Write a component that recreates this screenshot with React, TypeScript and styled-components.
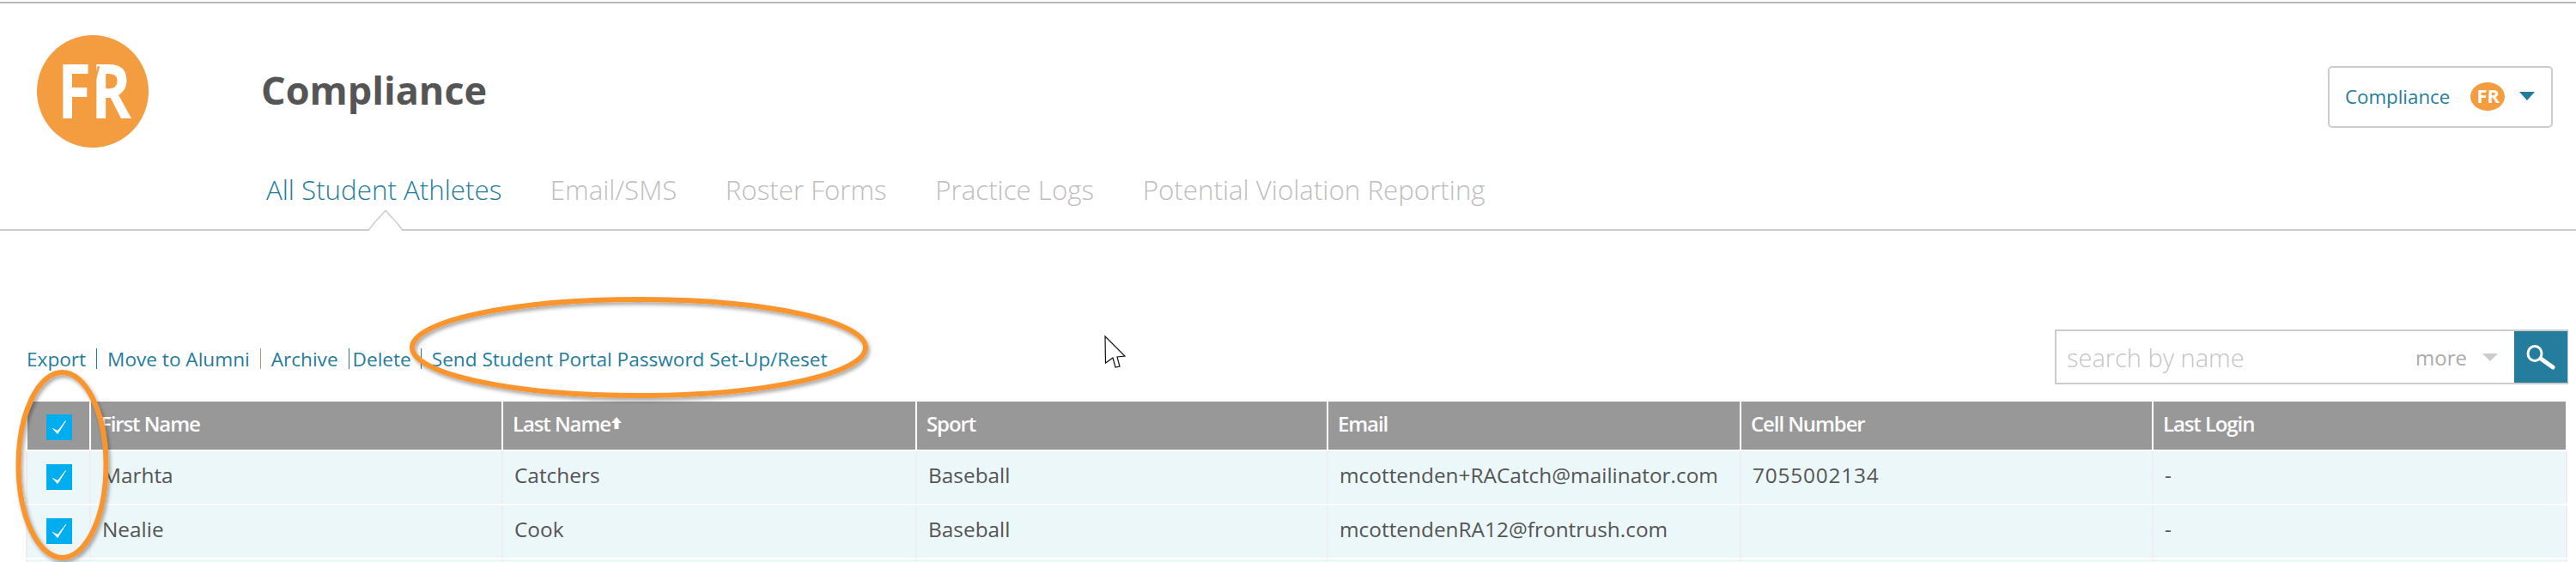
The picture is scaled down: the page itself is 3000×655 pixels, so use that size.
import React from 'react'
import styled, { createGlobalStyle } from 'styled-components'

const GlobalStyle = createGlobalStyle`
  html, body {
    margin: 0;
    padding: 0;
    background: #ffffff;
    font-family: "Open Sans", "Liberation Sans", sans-serif;
  }
`;

const Page = styled.div`
  position: relative;
  width: 3000px;
  height: 655px;
  overflow: hidden;
  padding-top: 2px;
  box-sizing: border-box;
`;

const TopRule = styled.div`
  height: 2px;
  background: #b7b7b7;
`;

const Masthead = styled.header`
  display: grid;
  grid-template-columns: 304px 1fr auto;
  grid-template-rows: 150px 113px;
  border-bottom: 2px solid #cccccc;
`;

const LogoSlot = styled.div`
  padding: 37px 0 0 43px;
`;

const Title = styled.h1`
  margin: 0;
  padding-top: 72px;
  font-size: 45px;
  line-height: 58px;
  font-weight: 700;
  color: #555555;
`;

const AccountMenu = styled.div`
  display: flex;
  align-items: center;
  width: 262px;
  height: 72px;
  margin: 73px 27px 0 0;
  padding: 0 0 2px 18px;
  box-sizing: border-box;
  border: 2px solid #cccccc;
  border-radius: 5px;
  color: #237c9c;
  font-size: 22.3px;
`;

const AccountName = styled.span`
  width: 146px;
`;

const Caret = styled.span<{ $color: string; $w: number; $h: number }>`
  display: block;
  width: 0;
  height: 0;
  border-left: ${p => p.$w / 2}px solid transparent;
  border-right: ${p => p.$w / 2}px solid transparent;
  border-top: ${p => p.$h}px solid ${p => p.$color};
`;

const BadgeSlot = styled.span`
  display: flex;
  margin-right: 17px;
`;

const Tabs = styled.nav`
  grid-column: 2 / 4;
  display: flex;
  gap: 56.5px;
  padding-left: 6px;
`;

const Tab = styled.a<{ $active?: boolean }>`
  position: relative;
  height: 113px;
  padding-top: 46px;
  box-sizing: border-box;
  font-size: 31.3px;
  line-height: 42px;
  font-weight: 300;
  color: ${p => (p.$active ? '#237c9c' : '#bdbdbd')};
`;

const TabPointer = styled.svg`
  position: absolute;
  left: 119px;
  bottom: -2px;
  width: 40px;
  height: 24px;
`;

const Toolbar = styled.div`
  display: flex;
  align-items: center;
  justify-content: space-between;
  height: 64px;
  margin: 115px 9px 20px 31px;
`;

const Actions = styled.div`
  display: flex;
  align-items: center;
  font-size: 22.6px;
  color: #237c9c;
  padding-top: 4px;
`;

const Pipe = styled.span<{ $w: number; $tan?: boolean; $snug?: boolean }>`
  width: ${p => p.$w}px;
  height: 24px;
  display: flex;
  justify-content: ${p => (p.$snug ? 'flex-end' : 'center')};
  padding-right: ${p => (p.$snug ? 4 : 0)}px;

  &::before {
    content: '';
    width: 1px;
    background: ${p => (p.$tan ? '#b7956a' : '#237c9c')};
  }
`;

const Search = styled.div`
  display: flex;
  align-items: center;
  width: 598px;
  height: 64px;
  box-sizing: border-box;
  border: 2px solid #cccccc;
  border-right-width: 1px;
`;

const SearchHint = styled.span`
  flex: 1;
  padding-left: 12px;
  font-size: 29px;
  font-weight: 300;
  color: #c4c4c4;
`;

const SearchMore = styled.span`
  margin-right: 18px;
  font-size: 24px;
  color: #aaaaaa;
`;

const SearchButton = styled.button`
  display: flex;
  align-items: center;
  justify-content: center;
  width: 62px;
  height: 60px;
  margin-left: 19px;
  padding: 0;
  border: none;
  background: #257d9e;
`;

const Table = styled.div`
  margin: 0 10px 0 30px;
`;

const Row = styled.div<{ $head?: boolean }>`
  display: grid;
  grid-template-columns: 72px 478px 480px 477px 479px 478px 480px;
  column-gap: 2px;
  padding: 0 2px;
  background: ${p => (p.$head ? '#ffffff' : '#eeeeee')};
  margin-bottom: 2px;
`;

const HeadCell = styled.div`
  display: flex;
  align-items: center;
  height: 56px;
  padding: 0 0 6px 11px;
  box-sizing: border-box;
  background: #989898;
  color: #ffffff;
  font-size: 24px;
  letter-spacing: -1.1px;
  font-weight: 600;
`;

const Cell = styled.div<{ $spread?: number }>`
  display: flex;
  align-items: center;
  height: 61px;
  padding: 0 0 6px 13px;
  box-sizing: border-box;
  background: #ecf7fa;
  color: #555555;
  font-size: 24.4px;
  letter-spacing: ${p => p.$spread ?? 0}px;
  white-space: nowrap;
`;

const CheckCell = styled.div<{ $head?: boolean }>`
  display: flex;
  align-items: center;
  justify-content: center;
  height: ${p => (p.$head ? 56 : 61)}px;
  padding: ${p => (p.$head ? '4px 0 0 2px' : '0 0 2px 2px')};
  box-sizing: border-box;
  background: ${p => (p.$head ? '#989898' : '#ecf7fa')};
`;

const CheckBox = styled.span`
  display: flex;
  width: 30px;
  height: 30px;
  background: #00aeef;
`;

const Overlay = styled.svg`
  position: absolute;
  left: 0;
  top: 0;
  width: 3000px;
  height: 655px;
  pointer-events: none;
`;

const columns = ['First Name', 'Last Name', 'Sport', 'Email', 'Cell Number', 'Last Login'];

const rows = [
  ['Marhta', 'Catchers', 'Baseball', 'mcottenden+RACatch@mailinator.com', '7055002134', '-'],
  ['Nealie', 'Cook', 'Baseball', 'mcottendenRA12@frontrush.com', '', '-'],
];

// the email and phone columns run wider than the rest in the source
const columnSpread = [0, 0, 0, 0, 0.8, 0];

const FrontRushLogo = ({ width, height }: { width: number; height: number }) => (
  <svg width={width} height={height} viewBox="0 0 130 130" preserveAspectRatio="none">
    <circle cx="65" cy="65" r="65" fill="#f39c40" />
    <text x="24" y="96" fontFamily="Open Sans" fontWeight="700" fontSize="87" fill="#ffffff" textLength="86" lengthAdjust="spacingAndGlyphs">FR</text>
    <path d="M72 36L62 72L58 96" stroke="#f39c40" strokeWidth="2.5" fill="none" />
  </svg>
);

const Check = () => (
  <svg width="30" height="30" viewBox="0 0 30 30">
    <path d="M7.5 16.5L13 22.5L22.5 7.5L13.2 19.5Z" fill="#ffffff" stroke="#ffffff" strokeWidth="1" strokeLinejoin="round" />
  </svg>
);

const SortArrow = () => (
  <svg width="14" height="14" viewBox="0 0 14 14">
    <path d="M7 0L13 7H9.5V14H4.5V7H1Z" fill="#ffffff" />
  </svg>
);

function App() {
  return (
    <Page>
      <GlobalStyle />
      <TopRule />
      <Masthead>
        <LogoSlot>
          <FrontRushLogo width={130} height={131} />
        </LogoSlot>
        <Title>Compliance</Title>
        <AccountMenu>
          <AccountName>Compliance</AccountName>
          <BadgeSlot>
            <FrontRushLogo width={40} height={33} />
          </BadgeSlot>
          <Caret $color="#237c9c" $w={19} $h={10} />
        </AccountMenu>
        <div />
        <Tabs>
          <Tab $active>
            All Student Athletes
            <TabPointer viewBox="0 0 40 24">
              <path d="M0 24C6 14 14 8 20 0C26 8 34 14 40 24" fill="#ffffff" stroke="#cccccc" strokeWidth="1.5" />
            </TabPointer>
          </Tab>
          <Tab>Email/SMS</Tab>
          <Tab>Roster Forms</Tab>
          <Tab>Practice Logs</Tab>
          <Tab>Potential Violation Reporting</Tab>
        </Tabs>
      </Masthead>

      <Toolbar>
        <Actions>
          <span>Export</span>
          <Pipe $w={25} />
          <span>Move to Alumni</span>
          <Pipe $w={25} $tan />
          <span>Archive</span>
          <Pipe $w={13} $snug />
          <span>Delete</span>
          <Pipe $w={24} />
          <span>Send Student Portal Password Set-Up/Reset</span>
        </Actions>
        <Search>
          <SearchHint>search by name</SearchHint>
          <SearchMore>more</SearchMore>
          <Caret $color="#cccccc" $w={19} $h={9} />
          <SearchButton aria-label="search">
            <svg width="36" height="30" viewBox="0 0 36 30">
              <ellipse cx="11" cy="11" rx="8" ry="8.5" fill="none" stroke="#ffffff" strokeWidth="3" />
              <path d="M18 17L32 27" stroke="#ffffff" strokeWidth="5" strokeLinecap="round" />
            </svg>
          </SearchButton>
        </Search>
      </Toolbar>

      <Table>
        <Row $head>
          <CheckCell $head>
            <CheckBox><Check /></CheckBox>
          </CheckCell>
          {columns.map(c => (
            <HeadCell key={c}>
              {c}
              {c === 'Last Name' && <SortArrow />}
            </HeadCell>
          ))}
        </Row>
        {rows.map(r => (
          <Row key={r[0]}>
            <CheckCell>
              <CheckBox><Check /></CheckBox>
            </CheckCell>
            {r.map((v, i) => (
              <Cell key={i} $spread={columnSpread[i]}>{v}</Cell>
            ))}
          </Row>
        ))}
        <Row>
          <CheckCell />
          {columns.map(c => (
            <Cell key={c} />
          ))}
        </Row>
      </Table>

      <Overlay viewBox="0 0 3000 655">
        <defs>
          <filter id="markup-shadow" x="-10%" y="-10%" width="120%" height="120%">
            <feDropShadow dx="2" dy="3" stdDeviation="2" floodColor="#000000" floodOpacity="0.35" />
          </filter>
        </defs>
        <g fill="none" stroke="#f8952f" strokeWidth="6" filter="url(#markup-shadow)">
          <ellipse cx="744" cy="405" rx="264" ry="56" />
          <ellipse cx="72.5" cy="542" rx="51" ry="108" />
        </g>
        <path
          d="M1287 392L1287.5 423L1296 417L1299 428L1304 427L1301 416L1310 415Z"
          fill="#ffffff"
          stroke="#111111"
          strokeWidth="1.2"
        />
      </Overlay>
    </Page>
  );
}

export default App;
